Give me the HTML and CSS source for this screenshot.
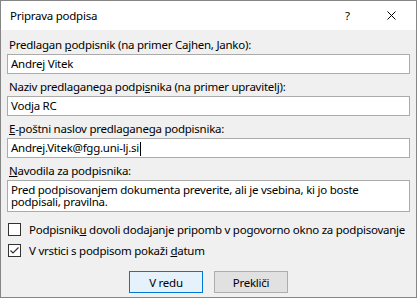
FILE: index.html
```html
<!DOCTYPE html>
<html lang="sl">
<head>
    <meta charset="UTF-8">
    <title>Priprava podpisa</title>
    <link rel="stylesheet" href="styles.css">
</head>
<body>
    <div class="dialog">
        <div class="titlebar">
            <div class="title">Priprava podpisa</div>
            <div class="help">?</div>
            <div class="close">
                <svg width="9" height="9" viewBox="0 0 9 9"><path d="M0.5 0.5 L8.5 8.5 M8.5 0.5 L0.5 8.5" stroke="#000" stroke-width="1" fill="none"/></svg>
            </div>
        </div>
        <div class="content">
            <div class="field">
                <div class="label">Predlagan <u>p</u>odpisnik (na primer Cajhen, Janko):</div>
                <div class="input">Andrej Vitek</div>
            </div>
            <div class="field">
                <div class="label">Naziv predlaganega podpi<u>s</u>nika (na primer upravitelj):</div>
                <div class="input">Vodja RC</div>
            </div>
            <div class="field">
                <div class="label"><u>E</u>-poštni naslov predlaganega podpisnika:</div>
                <div class="input">Andrej.Vitek@fgg.uni-lj.si<span class="caret"></span></div>
            </div>
            <div class="field">
                <div class="label"><u>N</u>avodila za podpisnika:</div>
                <div class="input textarea">Pred podpisovanjem dokumenta preverite, ali je vsebina, ki jo boste podpisali, pravilna.</div>
            </div>
            <div class="checks">
                <div class="check">
                    <span class="box"></span>
                    <span>Podpisnik<u>u</u> dovoli dodajanje pripomb v pogovorno okno za podpisovanje</span>
                </div>
                <div class="check">
                    <span class="box">
                        <svg width="11" height="11" viewBox="0 0 11 11"><path d="M1.5 5.5 L4 8 L9.5 2.5" stroke="#333" stroke-width="1.2" fill="none"/></svg>
                    </span>
                    <span>V vrstici s podpisom pokaži <u>d</u>atum</span>
                </div>
            </div>
            <div class="buttons">
                <button class="btn default">V redu</button>
                <button class="btn">Prekliči</button>
            </div>
        </div>
    </div>
</body>
</html>
```
FILE: styles.css
```css
body {
    margin: 0;
    font-family: 'Noto Sans', 'Open Sans', sans-serif;
    font-size: 11.5px;
    letter-spacing: -0.25px;
    color: #000;
    background: #fff;
}
.dialog {
    width: 417px;
    height: 298px;
    box-sizing: border-box;
    border: 1px solid #858585;
    background: #f0f0f0;
    display: flex;
    flex-direction: column;
}
.titlebar {
    height: 29px;
    background: #fff;
    display: flex;
    align-items: center;
    padding-left: 9px;
}
.title {
    flex: 1;
}
.help {
    width: 10px;
    margin-right: 32px;
}
.close {
    width: 9px;
    height: 9px;
    margin-right: 20px;
    display: flex;
}
.content {
    padding: 7px 6px 0 6px;
    display: flex;
    flex-direction: column;
}
.field {
    display: flex;
    flex-direction: column;
    margin-bottom: 5px;
}
.label {
    height: 16px;
    line-height: 16px;
    padding-left: 2px;
    margin-bottom: 1px;
    white-space: nowrap;
}
.input {
    height: 20px;
    box-sizing: border-box;
    border: 1px solid #ababab;
    background: #fff;
    padding: 0 0 0 3px;
    line-height: 18px;
    white-space: nowrap;
}
.textarea {
    height: 32px;
    white-space: normal;
    line-height: 12px;
    padding: 3px 20px 0 3px;
}
.caret {
    display: inline-block;
    width: 1px;
    height: 14px;
    background: #000;
    vertical-align: middle;
    margin-left: 1px;
}
.checks {
    display: flex;
    flex-direction: column;
    gap: 8px;
    margin-top: 6px;
    padding-left: 1px;
}
.check {
    display: flex;
    align-items: center;
    gap: 8px;
    height: 13px;
    white-space: nowrap;
}
.box {
    width: 13px;
    height: 13px;
    box-sizing: border-box;
    border: 1px solid #333;
    background: #fff;
    display: flex;
    align-items: center;
    justify-content: center;
    flex-shrink: 0;
}
.buttons {
    display: flex;
    justify-content: center;
    gap: 11px;
    margin-top: 14px;
}
.btn {
    width: 74px;
    height: 22px;
    box-sizing: border-box;
    border: 1px solid #adadad;
    background: #e1e1e1;
    font-family: inherit;
    font-size: inherit;
    letter-spacing: inherit;
    color: #000;
    padding: 0;
}
.btn.default {
    border-color: #0078d7;
    background: #e5f1fb;
}
```
